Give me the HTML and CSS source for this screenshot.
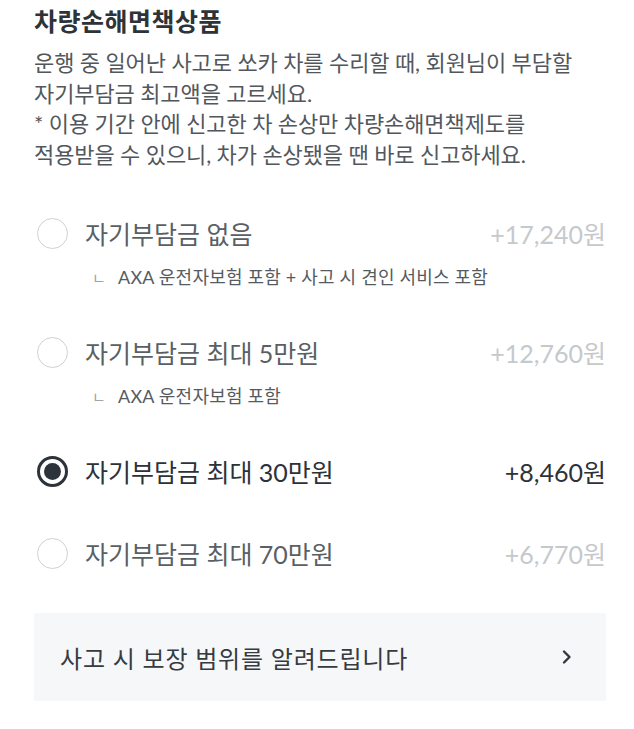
FILE: index.html
```html
<!DOCTYPE html>
<html lang="ko">
<head>
    <meta charset="utf-8">
    <link rel="stylesheet" href="styles.css">
</head>
<body>
    <div class="page">
        <h2 class="title">차량손해면책상품</h2>
        <p class="desc">
            운행 중 일어난 사고로 쏘카 차를 수리할 때, 회원님이 부담할<br>
            자기부담금 최고액을 고르세요.<br>
            * 이용 기간 안에 신고한 차 손상만 차량손해면책제도를<br>
            적용받을 수 있으니, 차가 손상됐을 땐 바로 신고하세요.
        </p>

        <ul class="options">
            <li class="option">
                <div class="optionRow">
                    <span class="radio"></span>
                    <span class="optionName">자기부담금 없음</span>
                    <span class="price">+17,240원</span>
                </div>
                <div class="optionNote"><span class="mark">ㄴ</span>AXA 운전자보험 포함 + 사고 시 견인 서비스 포함</div>
            </li>
            <li class="option">
                <div class="optionRow">
                    <span class="radio"></span>
                    <span class="optionName">자기부담금 최대 5만원</span>
                    <span class="price">+12,760원</span>
                </div>
                <div class="optionNote"><span class="mark">ㄴ</span>AXA 운전자보험 포함</div>
            </li>
            <li class="option selected">
                <div class="optionRow">
                    <span class="radio"></span>
                    <span class="optionName">자기부담금 최대 30만원</span>
                    <span class="price">+8,460원</span>
                </div>
            </li>
            <li class="option">
                <div class="optionRow">
                    <span class="radio"></span>
                    <span class="optionName">자기부담금 최대 70만원</span>
                    <span class="price">+6,770원</span>
                </div>
            </li>
        </ul>

        <a class="coverage" href="#">
            <span>사고 시 보장 범위를 알려드립니다</span>
            <svg width="12" height="16" viewBox="0 0 12 16">
                <path d="M3 2.5 L8.5 8 L3 13.5" fill="none" stroke="#33383d" stroke-width="2.4" stroke-linecap="round" stroke-linejoin="round"/>
            </svg>
        </a>
    </div>
</body>
</html>
```

FILE: styles.css
```css
body{
    margin: 0;
    background: #fff;
    font-family: Lato, "Noto Sans CJK KR", sans-serif;
}

.page{
    padding: 6px 28px 0 34px;
}

.title{
    margin: 0;
    font-size: 25px;
    line-height: 30px;
    font-weight: 700;
    color: #2e3338;
    letter-spacing: 0.5px;
}

.desc{
    margin: 12px 0 0;
    font-size: 22px;
    line-height: 30.5px;
    color: #52575d;
    letter-spacing: -0.1px;
}

.options{
    list-style: none;
    margin: 43px 0 0;
    padding: 0;
}
.option + .option{
    margin-top: 42px;
}

.optionRow{
    display: flex;
    align-items: center;
    height: 40px;
}

.radio{
    box-sizing: border-box;
    width: 31px;
    height: 31px;
    margin-left: 3px;
    border: 1.8px solid #cfd1d3;
    border-radius: 50%;
    flex: none;
    position: relative;
}
.selected .radio{
    border: 3px solid #2d333a;
}
.selected .radio::after{
    content: "";
    position: absolute;
    left: 4px;
    top: 4px;
    width: 17px;
    height: 17px;
    border-radius: 50%;
    background: #2d333a;
}

.optionName{
    margin-left: 17px;
    font-size: 25px;
    color: #5a5f65;
    flex: 1;
}
.selected .optionName{
    color: #2d3238;
}

.price{
    font-size: 25px;
    color: #c6c9cc;
}
.selected .price{
    color: #2d3238;
}

.optionNote{
    margin-top: 12px;
    padding-left: 58px;
    font-size: 18px;
    line-height: 24px;
    color: #565b61;
    letter-spacing: 0.2px;
}
.optionNote .mark{
    display: inline-block;
    width: 26px;
    font-size: 15px;
    color: #a0a4a8;
}

.coverage{
    display: flex;
    align-items: center;
    justify-content: space-between;
    margin-top: 40px;
    height: 88px;
    padding: 0 33px 0 26px;
    background: #f6f7f8;
    border-radius: 2px;
    text-decoration: none;
    font-size: 24px;
    color: #363b40;
    letter-spacing: 0.8px;
}
```
